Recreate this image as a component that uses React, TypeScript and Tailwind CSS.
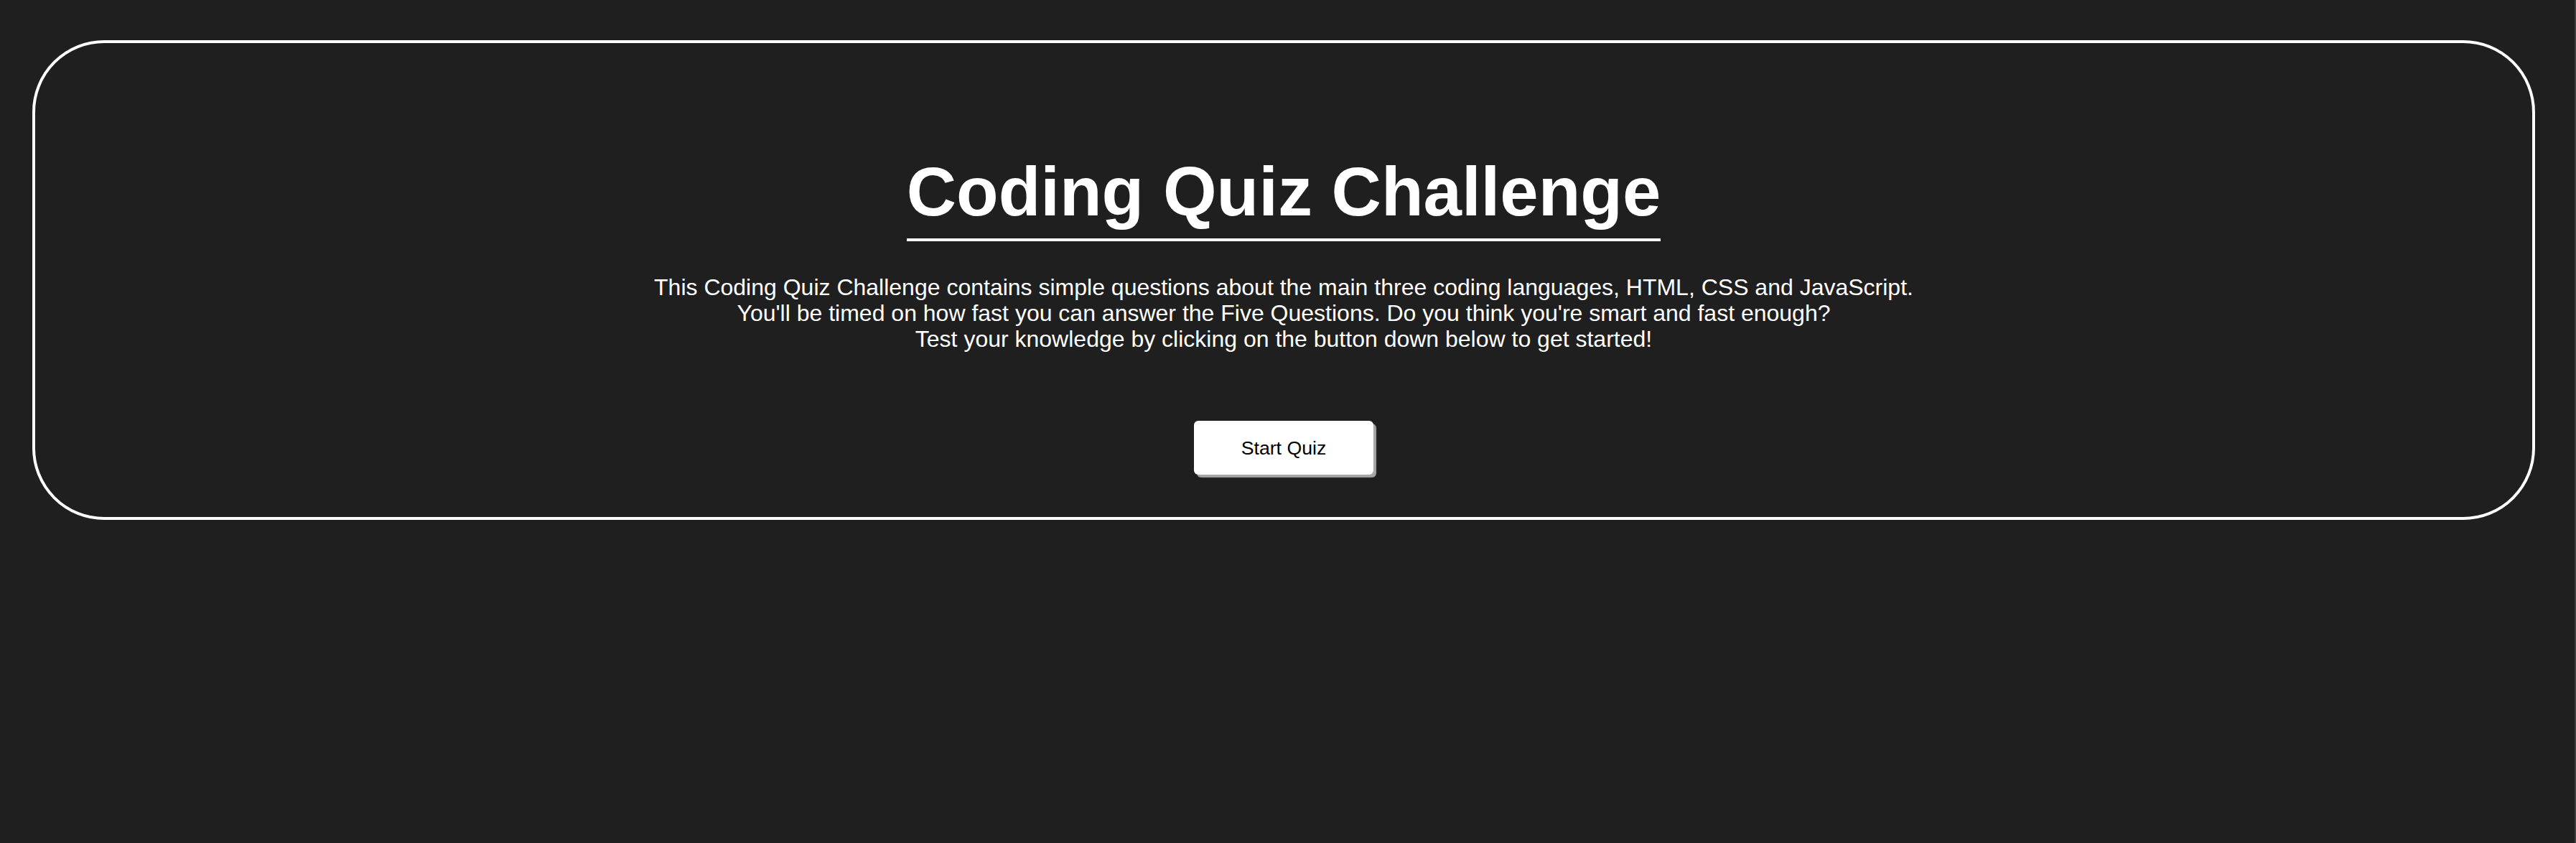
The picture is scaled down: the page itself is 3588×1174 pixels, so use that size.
export default function App() {
  return (
    <div className="min-h-screen bg-[#1f1f1f] border-r-2 border-[#3d3d3d] pt-[56px] pl-[45px] font-['Liberation_Sans',Arial,sans-serif] text-white">
      <div className="w-[3486px] h-[668px] border-4 border-white rounded-[100px] flex flex-col items-center pt-[152px]">
        <h1 className="text-[96px] leading-[110px] font-bold pb-[10px] border-b-4 border-white">Coding Quiz Challenge</h1>
        <p className="mt-[46px] text-[32px] leading-[36px] text-center">
          This Coding Quiz Challenge contains simple questions about the main three coding languages, HTML, CSS and JavaScript.
          <br />
          You'll be timed on how fast you can answer the Five Questions. Do you think you're smart and fast enough?
          <br />
          Test your knowledge by clicking on the button down below to get started!
        </p>
        <button className="mt-[96px] w-[250px] h-[75px] bg-white text-black text-[26.67px] rounded-[6px] shadow-[4px_4px_1px_#a6a6a6]">
          Start Quiz
        </button>
      </div>
    </div>
  )
}
